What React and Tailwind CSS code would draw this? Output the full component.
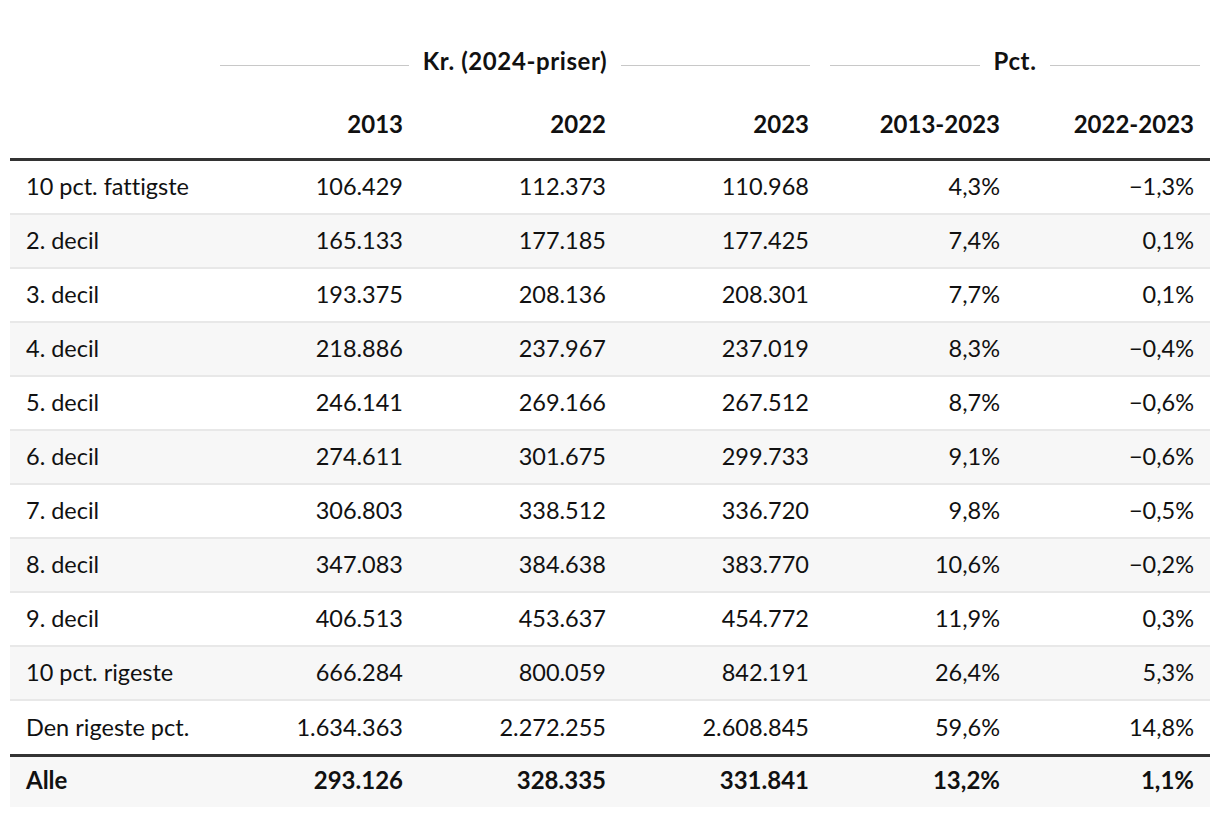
import React from "react";

const rows = [
  ["10 pct. fattigste", "106.429", "112.373", "110.968", "4,3%", "−1,3%"],
  ["2. decil", "165.133", "177.185", "177.425", "7,4%", "0,1%"],
  ["3. decil", "193.375", "208.136", "208.301", "7,7%", "0,1%"],
  ["4. decil", "218.886", "237.967", "237.019", "8,3%", "−0,4%"],
  ["5. decil", "246.141", "269.166", "267.512", "8,7%", "−0,6%"],
  ["6. decil", "274.611", "301.675", "299.733", "9,1%", "−0,6%"],
  ["7. decil", "306.803", "338.512", "336.720", "9,8%", "−0,5%"],
  ["8. decil", "347.083", "384.638", "383.770", "10,6%", "−0,2%"],
  ["9. decil", "406.513", "453.637", "454.772", "11,9%", "0,3%"],
  ["10 pct. rigeste", "666.284", "800.059", "842.191", "26,4%", "5,3%"],
  ["Den rigeste pct.", "1.634.363", "2.272.255", "2.608.845", "59,6%", "14,8%"],
];

const cols = "grid grid-cols-[210px_199px_203px_203px_191px_194px]";

export default function App() {
  return (
    <div
      className="w-[1220px] h-[818px] bg-white text-[#111] px-[10px] [font-variant-ligatures:none]"
      style={{ fontFamily: "Lato, 'Noto Sans', sans-serif" }}
    >
      {/* group header */}
      <div className={cols + " pt-[48px]"}>
        <div />
        <div className="col-span-3 flex items-center gap-[14px] pr-[15px]">
          <div className="flex-1 h-px bg-[#c8c8c8] mt-[8px]" />
          <div className="text-[24px] leading-[26px] font-bold tracking-[0.6px]">Kr. (2024-priser)</div>
          <div className="flex-1 h-px bg-[#c8c8c8] mt-[8px]" />
        </div>
        <div className="col-span-2 flex items-center gap-[14px] pl-[5px] pr-[10px]">
          <div className="flex-1 h-px bg-[#c8c8c8] mt-[8px]" />
          <div className="text-[24px] leading-[26px] font-bold tracking-[0.6px]">Pct.</div>
          <div className="flex-1 h-px bg-[#c8c8c8] mt-[8px]" />
        </div>
      </div>
      {/* column header */}
      <div className={cols + " h-[87px] items-end pb-[21px] border-b-[3px] border-[#333] text-[24px] leading-[26px] font-bold"}>
        <div />
        {["2013", "2022", "2023", "2013-2023", "2022-2023"].map((h) => (
          <div key={h} className="text-right pr-[16px]">{h}</div>
        ))}
      </div>
      {rows.map((r, i) => {
        const last = i === rows.length - 1;
        return (
          <div
            key={r[0]}
            className={
              cols +
              " items-center pb-[2px] text-[23.5px] leading-[26px] " +
              (i % 2 === 1 ? "bg-[#f7f7f7] " : "bg-white ") +
              (last ? "h-[56px] border-b-[3px] border-[#333]" : "h-[54px] border-b-2 border-[#e8e8e8]")
            }
          >
            {r.map((c, j) => (
              <div key={j} className={j === 0 ? "pl-[16px]" : "text-right pr-[16px]"}>{c}</div>
            ))}
          </div>
        );
      })}
      <div className={cols + " h-[50px] items-center pb-[4px] text-[24px] leading-[26px] font-bold bg-[#f7f7f7]"}>
        {["Alle", "293.126", "328.335", "331.841", "13,2%", "1,1%"].map((c, j) => (
          <div key={j} className={j === 0 ? "pl-[16px]" : "text-right pr-[16px]"}>{c}</div>
        ))}
      </div>
    </div>
  );
}
